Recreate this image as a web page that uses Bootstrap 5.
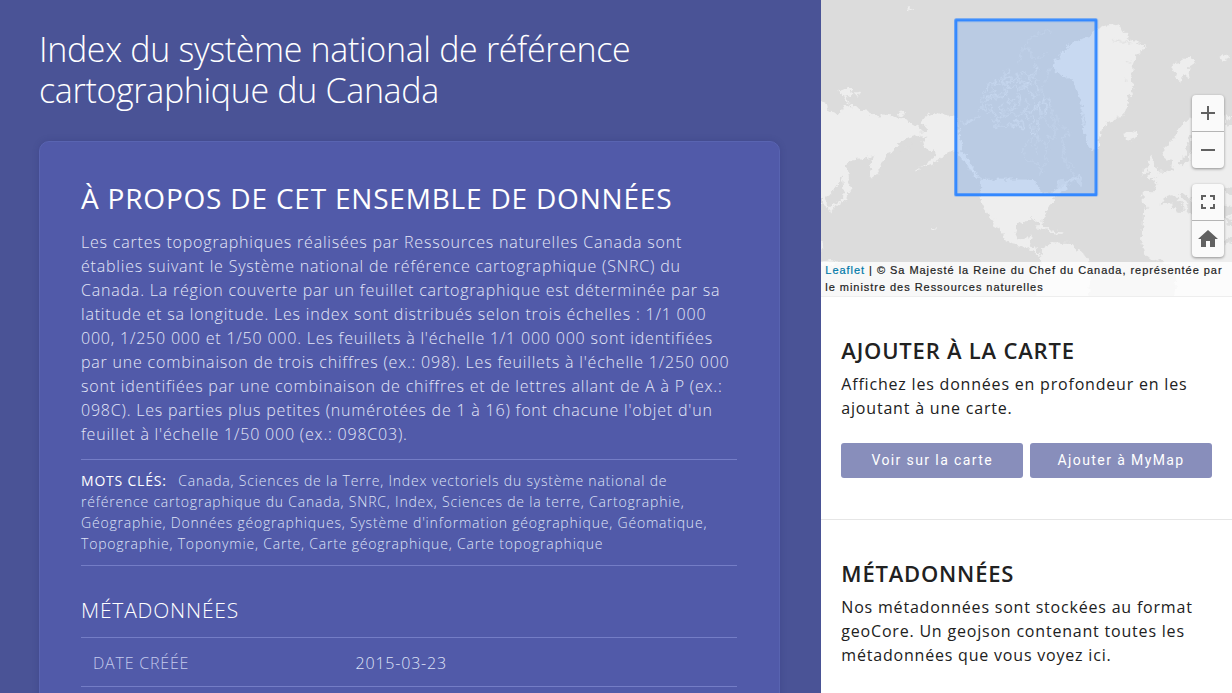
<!DOCTYPE html>
<html lang="fr">
<head>
<meta charset="utf-8">
<meta name="viewport" content="width=device-width, initial-scale=1">
<title>Index du système national de référence cartographique du Canada</title>
<link href="https://cdn.jsdelivr.net/npm/bootstrap@5.3.0/dist/css/bootstrap.min.css" rel="stylesheet">
<style>
  body { font-family: "Open Sans", sans-serif; font-size: 16px; line-height: 24px; letter-spacing: .05rem; color: #212121; background: #fff; }
  .dataset-main { background: #4a5396; color: #fff; padding: 29px 41px 40px 39px; font-weight: 300; }
  .dataset-title { font-size: 34px; line-height: 41px; font-weight: 300; letter-spacing: -.01em; margin-bottom: 30px; }
  .about-panel { background: #515aa9; border: 1px solid #5964b1; border-radius: 10px; padding: 39px 42px 39px 41px; box-shadow: 0 0 6px rgba(40, 45, 110, .25); }
  .about-panel h2 { font-size: 28px; line-height: 34px; font-weight: 400; margin-bottom: 15px; }
  .about-text { color: #e4e7f8; margin-bottom: 13px; }
  .keywords { font-size: 14px; line-height: 21px; color: #dfe3f7; padding: 10px 0 11px; border: solid #747dc6; border-width: 1px 0; margin-bottom: 32px; }
  .keywords strong { font-weight: 400; color: #fff; margin-right: 7px; }
  .about-panel h3 { font-size: 21px; line-height: 25px; font-weight: 300; margin-bottom: 14px; }
  .meta-table { width: 100%; border-top: 1px solid #747dc6; color: #dfe3f7; }
  .meta-table th { width: 40%; font-weight: 300; text-transform: uppercase; color: #c5cbed; }
  .meta-table th, .meta-table td { padding: 13px 12px 11px; border-bottom: 1px solid #747dc6; }

  .map-view { height: 297px; background: #dcdcdc; border-bottom: 1px solid #eee; }
  .map-attribution { font: 11px/17px "Liberation Sans", sans-serif; letter-spacing: .06rem; color: #222; background: rgba(255, 255, 255, .8); padding: 0 4px; -webkit-text-stroke: .2px; }
  .map-attribution a { color: #0078a8; text-decoration: none; }
  .map-controls { right: 8px; bottom: 39px; gap: 16px; }
  .control-group { width: 32px; border-radius: 4px; background: #fafafa; box-shadow: 0 1px 3px rgba(0, 0, 0, .4); overflow: hidden; }
  .control-group button { height: 36px; border: 0; padding: 0; background: none; color: #616161; }
  .control-group button + button { height: 37px; border-top: 1px solid #b5b5b5; }
  .control-group svg { display: block; margin: 0 auto; }

  .side-section { padding: 40px 20px; border-bottom: 1px solid #e6e6e6; }
  .side-section:last-child { border-bottom: 0; }
  .side-section h2 { font-size: 22px; line-height: 26px; font-weight: 600; margin-bottom: 9px; }
  .side-section p { margin: 0; }
  .side-actions { gap: 7px; margin: 23px 0 1px; }
  .btn-side { --bs-btn-color: #fff; --bs-btn-bg: #888ebb; --bs-btn-hover-color: #fff; --bs-btn-hover-bg: #6d74aa; font-family: Roboto, sans-serif; font-size: 14px; line-height: 21px; letter-spacing: .1em; padding: 7px 0; border: 0; border-radius: 3px; }
</style>
</head>
<body>
<div class="container-fluid p-0 overflow-hidden">
  <div class="row g-0 min-vh-100">
    <main class="col-8 dataset-main">
      <h1 class="dataset-title">Index du système national de référence cartographique du Canada</h1>
      <section class="about-panel">
        <h2>À PROPOS DE CET ENSEMBLE DE DONNÉES</h2>
        <p class="about-text">Les cartes topographiques réalisées par Ressources naturelles Canada sont établies suivant le Système national de référence cartographique (SNRC) du Canada. La région couverte par un feuillet cartographique est déterminée par sa latitude et sa longitude. Les index sont distribués selon trois échelles : 1/1 000 000, 1/250 000 et 1/50 000. Les feuillets à l'échelle 1/1 000 000 sont identifiées par une combinaison de trois chiffres (ex.: 098). Les feuillets à l'échelle 1/250 000 sont identifiées par une combinaison de chiffres et de lettres allant de A à P (ex.: 098C). Les parties plus petites (numérotées de 1 à 16) font chacune l'objet d'un feuillet à l'échelle 1/50 000 (ex.: 098C03).</p>
        <p class="keywords"><strong>MOTS CLÉS:</strong> Canada, Sciences de la Terre, Index vectoriels du système national de référence cartographique du Canada, SNRC, Index, Sciences de la terre, Cartographie, Géographie, Données géographiques, Système d'information géographique, Géomatique, Topographie, Toponymie, Carte, Carte géographique, Carte topographique</p>
        <h3>MÉTADONNÉES</h3>
        <table class="meta-table">
          <tbody><tr><th scope="row">Date créée</th><td>2015-03-23</td></tr></tbody>
        </table>
      </section>
    </main>

    <aside class="col-4">
      <div class="map-view position-relative overflow-hidden">
        <svg class="d-block w-100 h-100" viewBox="0 0 1233 891" preserveAspectRatio="xMidYMid slice" role="img" aria-label="Carte de l'étendue">
          <filter id="coast" x="0" y="0" width="1233" height="891" filterUnits="userSpaceOnUse"><feTurbulence type="fractalNoise" baseFrequency=".07" numOctaves="3" seed="4"/><feDisplacementMap in="SourceGraphic" scale="22" xChannelSelector="R" yChannelSelector="G"/></filter>
          <g fill="#eeeeee" filter="url(#coast)">
            <!-- Siberia, Japan -->
            <path d="M-20 300l32 9 10 8 4 20 22 4 14-3 4-16 8-6 38 8 4 10 36 4 4 10 22 3 8-6 24 2 20 8 24 3 20 14 18 10 8 14-8 10-18 8-26 6-18 16-16 22-16 6-12 20-8 18-8 18-12 14-8-10-3-22 4-16 14-12-8-4-24 6-26 2-16 2-18 16 4 14-12 16-10 22-18 26-12 14-20 8h-20z"/>
            <path d="M70 504l10 4 4 20-2 26 12 14-6 10-10-4 4 14-4 12-12 12-22 8-14 20-6-12 10-12 22-8 10-14 2-20-4-30z"/>
            <path d="M0 590l10 6 14 22-6 8-10-8-8-4zM58 268l20-4 12 6 4 14-10 6-18-2-10-8zM98 278l10 0 8 10-10-1zM68 290l8 0 6 16 6 6-8-1zM228 344l14-8 10 2-6 10-16 1zM262 28l6-3 6 6-7 4zM0 720l8 10 2 18-10 8zM0 786l30-4 26 6v8H0zM331 682l8 3 7 10-8-4z"/>
            <!-- Alaska -->
            <path d="M405 352l-27-1-28-11-16 2-20 10-18 20 18 10 2 12-24 8 4 8 24 2-18 16 6 18 28 10 12 4-10 16-26 18-14 8 20-3 34-16 14-16 18-10 14-1 27 2z"/>
            <path d="M410 456l18 6 20 18 6 22 14 22 12 18-14-10-12-12-14-24-18-20-12-8zM283 512l12-4 2 4-13 4z"/>
            <!-- Mexico, Central America, Caribbean, South America -->
            <path d="M476 541l156-1 14 10 12 16 1 13 26 0 28-12 22-10 6 10-20 14-18 12-12 20-12 16-6 10 2 12-10 10 2 22-7 0-6-16-10-8-24 1-10 8-18 2-6 12-2 16 10 20 18 4 10-10 14-3-2 12-10 10 4 8 18 4 6 16 8 10 14 6 10-6 14 2-2 8-12 2-14-1-16-10-18-16-24-8-16-8-22-4-18-8-4-14-14-14-14-22-16-18-6-14-12-18-10-22z"/>
            <path d="M512 646l8 4 16 24 10 16-6-4-16-20zM646 681l18-1 22 8 14 8 28 3-3 5-32-3-20-9-24-8zM664 748l18-8 8-12 28 2 34 1 14 16 24 16 16 20v130H650v-78l10-38z"/>
            <path d="M704 566l6-22 14-8 12 8 14-10 20-4-8 10-18 14-20 18-10 2zM762 530l10-4 8 14 8 12-12 4-12-10z" opacity=".6"/>
            <!-- Greenland -->
            <path d="M738 148l8-16 24-8 18-8 14-6 10-8 18-14 20-12 20-3 16 4 18 8 8 14 12 6-6 12 18 6 26 8 16 0-12 26-16 4-8 18-6 16 3 18-6 22 2 18 6 10-10 20-8 12-2 18-6 18-4 14-10 8-20 6-22 12-16 20-10 30-6 34-16-6-12-16-8-22-4-24-6-40 2-30-12-40-8-26-16-18-20 2-10-12-10-8-12-14 4-16 16-6 2-16z"/>
            <path d="M902 404l12-4 8-6 22 2 8 8-6 10-20 12-12-4 4-8-14-4zM1052 200l8-10 20-2 8-14 22 2 14 4-6 16-14 4-2 10 6 14 2 12-10-4-8-12-8 14-6 18-8-20-12-18zM1198 170l14-8 14 4-2 12-12 8-8-8z"/>
            <!-- Europe -->
            <path d="M1140 342l-18 10-22 10-18 16-12 20-12 20-18 18-12 12 2 26 10 8 14 2-2 16 8 10-24 8-14-2-12 14-14 12 14 8-4 18-4 10-36-1v32l10 10 16 8 28-14 12-18 16-8 14 2 18 20 10 8 2 14-12-2 20 8 4-14-14-22-16-18 14-4 14 12 24 30 10 20 10-2 4-20h90V350z"/>
            <path d="M984 486l6-18 8 8-2 14 12 18 10 12-6 12-24 6-8-8 8-10-6-14zM966 514l10-10 8 4-4 14-14 3z"/>
            <!-- Africa -->
            <path d="M970 628l30-8 32-10 22 0 4 18 22 10 14-2 12 8 157 6v270h-200l4-100-12-20-22-14-28-4-20-8-16-16-6-22-2-18 8-40z"/>
          </g>
          <g fill="#dcdcdc" filter="url(#coast)">
            <path d="M1102 420l12-14v46l-10 20 4 14-24 14-10-4 6-20 18-16-2-20zM228 450l30-8 16-12 10-2-16 22-16 6zM1208 640l12 10 33 40v16l-35-40zM1210 726l43-28v12l-38 28zM1206 560l40 10v20l-26-6zM1212 350l12 10 26-14v30l-32 6z"/>
          </g>
          <!-- Arctic archipelago and Hudson Bay shorelines -->
          <g filter="url(#coast)">
          <g fill="none" stroke="#f8f8f8" stroke-width="3" stroke-linejoin="round" opacity=".65">
            <path d="M418 368l14 4 16-6 18-10 8-6M430 372l12-4 14-8M470 340l12-16 10 4 8-14 12 6-2 16-14 8M486 320l-6-18 8-20 12-10 2-20 10 4 12-18-4 20 14-4 4-18 12 6-6 14 14-6 8 10-14 10 6 12-18-4-10 12-12-8-8 14-14-2-6 16M512 262l10 8-14 8M492 294l20-6 14 10 20-6M548 214l10 10-14 12 18-4 12 10-14 10 20-2 6-24 12 8-8 16 20-6 10 12-18 6"/>
            <path d="M520 288l16 6 14-10 14 8-6 16 20-2 8-16 14 4-4 18-18 4 8 14-22-4-12 12-16-10 8-14M552 252l16 12 18-8 10 14 20-8 4 18 18-4-4 20 16-6 4-24-12-16 10-8-14-14-12 8 6 18-20-4"/>
            <path d="M512 362l18-4 6 12-18 6 4 8 22-6 12 6 10-12 18 8 12-8-14-10 24 4 4 18-20-4M540 356l-4-16 22 6 14-10 12 12 18-6 14 8M560 378l14 4 10-8 22 12M500 330l20 8 8 18 24-6"/>
            <path d="M612 296l14 18-8 20 16 8 8-18 16-10-4 24 20 8 6-28-18-14 22-8 4 20M640 310l4 26M654 306v28M672 304l4 30M630 350l10 16-14 16 12 24 16-20-6-24 16-14M622 318l-12 18 12 24"/>
            <path d="M600 226l14-6 8 10 14-8M646 196l6 20-14 10M566 224l-4-14M590 280l10 8-8 12M604 250l12 8"/>
          </g>
          <g fill="none" stroke="#f8f8f8" stroke-width="3" stroke-linejoin="round" opacity=".4">
            <path d="M588 194l10-14 4-28 12-16 6-12 18-14 18-10 10 4 10-12 20 4M608 146l14 4 8 18 14 12-6 18 14 6-10 16M620 142l16 24M648 178l18-12 12-2M680 216l16-16 10-18 14-16 18-18M672 246l8-16 8-20M670 256l-10 14 8 24-6 16"/>
            <path d="M684 318l12 16 12 14 2 20 14 14 16 8 8 16-16 2-6 20 6 18-8 22 8 20 12 14 12 18 6 16 4 14M700 330l-10 14 14 18-8 18 12 12M660 354l16 8 10 20 18 14-6 18-18-4 8 16-14 10-8-18-14 8-4-18-14-8 4-20 16 8"/>
            <path d="M626 422l-12 14-6 20 4 22 18 8 22 8 8 18-4 18M664 518l4-18 12-14-8-20 10-20-16-14M650 396l4 22-10 22 6 26M638 408l-6 14 6 16M732 450l-6-10M738 486l14 10 14 14M710 580l16-22 22-16 30-8M714 540l-6 14 10 8"/>
            <path d="M414 462l12 14 16 6-4 14 14 10 4 16 10 10M428 478l14 18 4 18"/>
          </g>
          <g fill="none" stroke="#dcdcdc" stroke-width="3">
            <path d="M880 123l24 4 14-2 14 10M918 186l10 4M910 240l10 4M780 344l14 16-6 14M890 350l10 8"/>
          </g>
          </g>
          <rect x="405" y="61" width="421" height="525" fill="#3388ff" fill-opacity=".2" stroke="#3388ff" stroke-width="9" stroke-linejoin="round"/>
        </svg>

        <div class="map-controls position-absolute d-flex flex-column">
          <div class="control-group d-flex flex-column">
            <button type="button" aria-label="Zoom avant"><svg width="24" height="24" viewBox="0 0 24 24" fill="currentColor"><path d="M19 13h-6v6h-2v-6H5v-2h6V5h2v6h6v2z"/></svg></button>
            <button type="button" aria-label="Zoom arrière"><svg width="24" height="24" viewBox="0 0 24 24" fill="currentColor"><path d="M19 13H5v-2h14v2z"/></svg></button>
          </div>
          <div class="control-group d-flex flex-column">
            <button type="button" aria-label="Plein écran"><svg width="24" height="24" viewBox="0 0 24 24" fill="currentColor"><path d="M7 14H5v5h5v-2H7v-3zm-2-4h2V7h3V5H5v5zm12 7h-3v2h5v-5h-2v3zM14 5v2h3v3h2V5h-5z"/></svg></button>
            <button type="button" aria-label="Étendue initiale"><svg width="24" height="24" viewBox="0 0 24 24" fill="currentColor"><path d="M10 20v-6h4v6h5v-8h3L12 3 2 12h3v8z"/></svg></button>
          </div>
        </div>
        <div class="map-attribution position-absolute bottom-0 start-0 end-0"><a href="#">Leaflet</a> | © Sa Majesté la Reine du Chef du Canada, représentée par le ministre des Ressources naturelles</div>
      </div>

      <section class="side-section">
        <h2>AJOUTER À LA CARTE</h2>
        <p>Affichez les données en profondeur en les ajoutant à une carte.</p>
        <div class="side-actions d-flex">
          <button type="button" class="btn btn-side flex-fill w-50">Voir sur la carte</button>
          <button type="button" class="btn btn-side flex-fill w-50">Ajouter à MyMap</button>
        </div>
      </section>
      <section class="side-section">
        <h2>MÉTADONNÉES</h2>
        <p>Nos métadonnées sont stockées au format geoCore. Un geojson contenant toutes les métadonnées que vous voyez ici.</p>
      </section>
    </aside>
  </div>
</div>
<script src="https://cdn.jsdelivr.net/npm/bootstrap@5.3.0/dist/js/bootstrap.bundle.min.js"></script>
</body>
</html>
